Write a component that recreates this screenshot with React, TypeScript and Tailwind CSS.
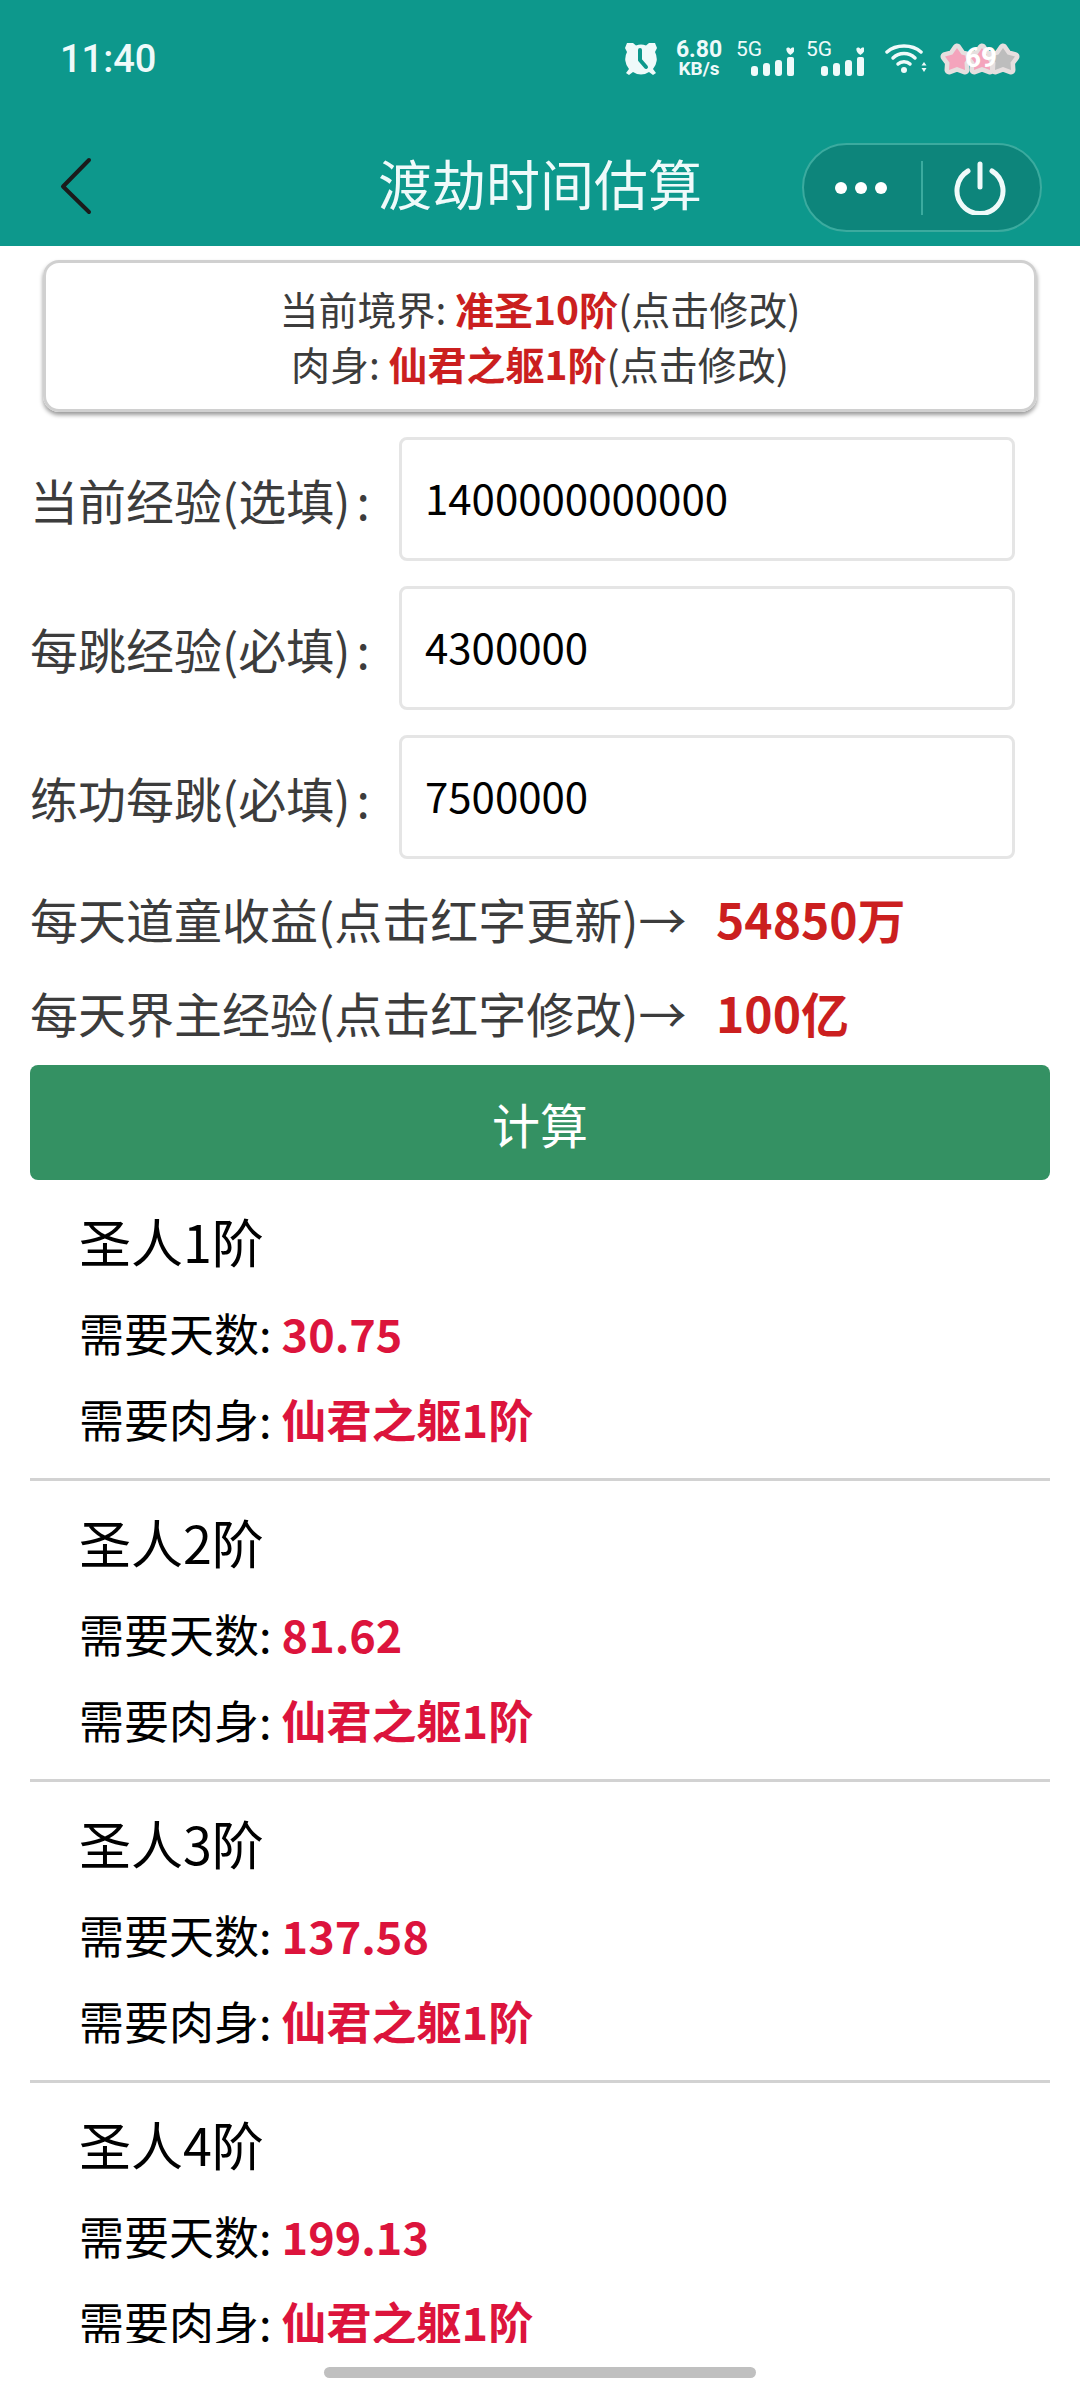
import React from "react";

const font = { fontFamily: '"Noto Sans CJK SC", "Noto Sans", sans-serif' };
const roboto = { fontFamily: '"Roboto", sans-serif' };

const Bars = () => (
  <svg width="43" height="30" viewBox="0 0 43 30" fill="#effafa">
    <rect x="0" y="19" width="7" height="10" rx="3" />
    <rect x="12" y="16" width="7" height="13" rx="3" />
    <rect x="24" y="13" width="7" height="16" rx="3" />
    <rect x="36" y="10" width="7" height="19" rx="2" />
    <path d="M39.5 8 C34.5 5 34.5 .5 37 .5 C38.3 .5 39.1 1.2 39.5 2 C39.9 1.2 40.7 .5 42 .5 C44.5 .5 44.5 5 39.5 8Z" />
  </svg>
);

const Signal = () => (
  <div className="relative w-[58px] h-[36px]">
    <span className="absolute left-0 top-[-4px] text-[21px] leading-[24px] text-[#effafa]" style={roboto}>
      5G
    </span>
    <div className="absolute left-[15px] top-[6px]">
      <Bars />
    </div>
  </div>
);

const Star = ({ fill }: { fill: string }) => (
  <svg width="38" height="34" viewBox="0 0 38 34">
    <path
      d="M19 6 L23.5 12.5 L31 14.5 L26.5 20.5 L27 28 L19 25 L11 28 L11.5 20.5 L7 14.5 L14.5 12.5Z"
      fill={fill}
      stroke="#e6dfdf"
      strokeWidth="9"
      strokeLinejoin="round"
      paintOrder="stroke"
    />
  </svg>
);

const StatusBar = () => (
  <div className="h-[111px] pt-[6px] pl-[60px] pr-[60px] flex items-center justify-between">
    <span className="text-[38px] font-medium text-[#effafa] leading-none" style={roboto}>
      11:40
    </span>
    <div className="flex items-center">
      <svg width="34" height="34" viewBox="0 0 34 34" className="mr-[18px]">
        <path d="M3 1 L9 1 L12 3.5 A15 15 0 0 1 22 3.5 L25 1 L31 1 L33 6 L31 10 A15 15 0 0 1 29 27 L32 31 L29 33 L25 30 A15 15 0 0 1 9 30 L5 33 L2 31 L5 27 A15 15 0 0 1 3 10 L1 6Z" fill="#effafa" />
        <path d="M16 8 L16 18 L22 25" fill="none" stroke="#0d988c" strokeWidth="4" strokeLinecap="round" strokeLinejoin="round" />
      </svg>
      <div className="flex flex-col items-center w-[46px] mr-[14px] text-[#effafa]" style={roboto}>
        <span className="text-[23px] font-bold leading-[20px]">6.80</span>
        <span className="text-[19px] font-bold leading-[17px]">KB/s</span>
      </div>
      <Signal />
      <div className="w-[12px]" />
      <Signal />
      <svg width="42" height="30" viewBox="0 0 42 30" className="ml-[21px]" fill="none" stroke="#effafa" strokeLinecap="round">
        <path d="M2 8 C11 0 27 0 36 8" strokeWidth="3.5" />
        <path d="M8 14 C14 8 24 8 30 14" strokeWidth="3.5" />
        <path d="M13 20 C16 17 22 17 25 20" strokeWidth="3.5" />
        <circle cx="19" cy="26" r="3" fill="#effafa" stroke="none" />
        <path d="M39 18 L41.5 21.5 L36.5 21.5Z M39 28 L41.5 24 L36.5 24Z" fill="#effafa" stroke="none" />
      </svg>
      <div className="relative ml-[13px] w-[80px] h-[34px]">
        <div className="absolute left-[-2px] top-0"><Star fill="#f4a4bc" /></div>
        <div className="absolute left-[23px] top-0"><Star fill="#f4a4bc" /></div>
        <div className="absolute left-[44px] top-0"><Star fill="#bdbdbd" /></div>
        <span className="absolute left-[25px] top-[0px] text-[28px] font-bold leading-[32px] text-white" style={roboto}>
          69
        </span>
      </div>
    </div>
  </div>
);

const NavBar = () => (
  <div className="relative h-[135px] flex items-center justify-center">
    <svg width="34" height="60" viewBox="0 0 34 60" className="absolute left-[60px] top-[46px]" fill="none" stroke="#1b1b1b" strokeWidth="4" strokeLinecap="round" strokeLinejoin="round">
      <path d="M29 3 L3 29.5 L29 55" />
    </svg>
    <h1 className="text-[54px] leading-none text-[#effafa] mt-[9px]">渡劫时间估算</h1>
    <div className="absolute left-[802px] top-[32px] w-[240px] h-[89px] rounded-full border-2 border-[#3bab9f] bg-[#0d857b] flex items-center">
      <div className="w-[117px] pr-[3px] flex justify-center gap-[8px]">
        <span className="w-[12px] h-[12px] rounded-full bg-white" />
        <span className="w-[12px] h-[12px] rounded-full bg-white" />
        <span className="w-[12px] h-[12px] rounded-full bg-white" />
      </div>
      <div className="w-[2px] h-[54px] bg-[#3bab9f]" />
      <div className="flex-1 flex justify-center pr-[3px]">
        <svg width="52" height="54" viewBox="0 0 52 54" fill="none" stroke="#effafa" strokeWidth="5" strokeLinecap="round">
          <path d="M26 3 L26 26" />
          <path d="M14 10 A23 23 0 1 0 38 10" />
        </svg>
      </div>
    </div>
  </div>
);

const Field = ({ label, value }: { label: string; value: string }) => (
  <div className="flex items-center h-[124px]">
    <label className="w-[369px] text-[48px] leading-none text-[#3c3c3c] whitespace-nowrap">
      {label}
      <span className="ml-[6px]">:</span>
    </label>
    <div className="w-[616px] h-[124px] border-[3px] border-[#e5e5e5] rounded-[8px] flex items-center pl-[23px] pb-[5px] text-[42px] text-black">
      {value}
    </div>
  </div>
);

const Stat = ({ label, value }: { label: string; value: string }) => (
  <div className="flex items-center h-[94px] text-[48px] leading-none whitespace-nowrap">
    <span className="text-[#3c3c3c] w-[686px]">{label}</span>
    <span className="font-bold text-[#cb1f1f]">{value}</span>
  </div>
);

const Result = ({ level, days, last }: { level: string; days: string; last?: boolean }) => (
  <div className={last ? "pl-[49px] pt-[11px] h-[301px]" : "pl-[49px] pt-[11px] h-[301px] border-b-[3px] border-[#d2d2d2]"}>
    <div className="h-[100px] flex items-center text-[52px] leading-none text-black">{level}</div>
    <div className="h-[82px] flex items-center text-[45px] leading-none text-black whitespace-nowrap">
      需要天数:&nbsp;<span className="font-bold text-[#dc143c]">{days}</span>
    </div>
    <div className="h-[90px] flex items-center text-[45px] leading-none text-black whitespace-nowrap">
      需要肉身:&nbsp;<span className="font-bold text-[#dc143c]">仙君之躯1阶</span>
    </div>
  </div>
);

export default function App() {
  return (
    <div className="relative w-[1080px] h-[2400px] overflow-hidden bg-white" style={font}>
      <div className="bg-[#0d988c] h-[246px]">
        <StatusBar />
        <NavBar />
      </div>

      <div className="mx-[43px] mt-[14px] h-[152px] rounded-[16px] border-[3px] border-[#d0d0d0] shadow-[0_3px_4px_#9a9a9a] flex flex-col items-center justify-center text-[39px] leading-[55px] text-[#3c3c3c] whitespace-nowrap">
        <p>
          当前境界: <span className="font-bold text-[#cb1f1f]">准圣10阶</span>(点击修改)
        </p>
        <p>
          肉身: <span className="font-bold text-[#cb1f1f]">仙君之躯1阶</span>(点击修改)
        </p>
      </div>

      <div className="mt-[25px] pl-[30px]">
        <div className="flex flex-col gap-[25px]">
          <Field label="当前经验(选填)" value="1400000000000" />
          <Field label="每跳经验(必填)" value="4300000" />
          <Field label="练功每跳(必填)" value="7500000" />
        </div>
        <div className="mt-[12px] mb-[6px]">
          <Stat label="每天道童收益(点击红字更新)→" value="54850万" />
          <Stat label="每天界主经验(点击红字修改)→" value="100亿" />
        </div>
      </div>

      <div className="mx-[30px]">
        <button className="w-full h-[115px] rounded-[8px] bg-[#349163] text-white text-[48px] leading-none">计算</button>
        <Result level="圣人1阶" days="30.75" />
        <Result level="圣人2阶" days="81.62" />
        <Result level="圣人3阶" days="137.58" />
        <Result level="圣人4阶" days="199.13" last />
      </div>

      <div className="absolute left-0 bottom-0 w-full h-[57px] bg-white flex justify-center pt-[24px]">
        <div className="w-[432px] h-[11px] rounded-full bg-[#c0c0c0]" />
      </div>
    </div>
  );
}
